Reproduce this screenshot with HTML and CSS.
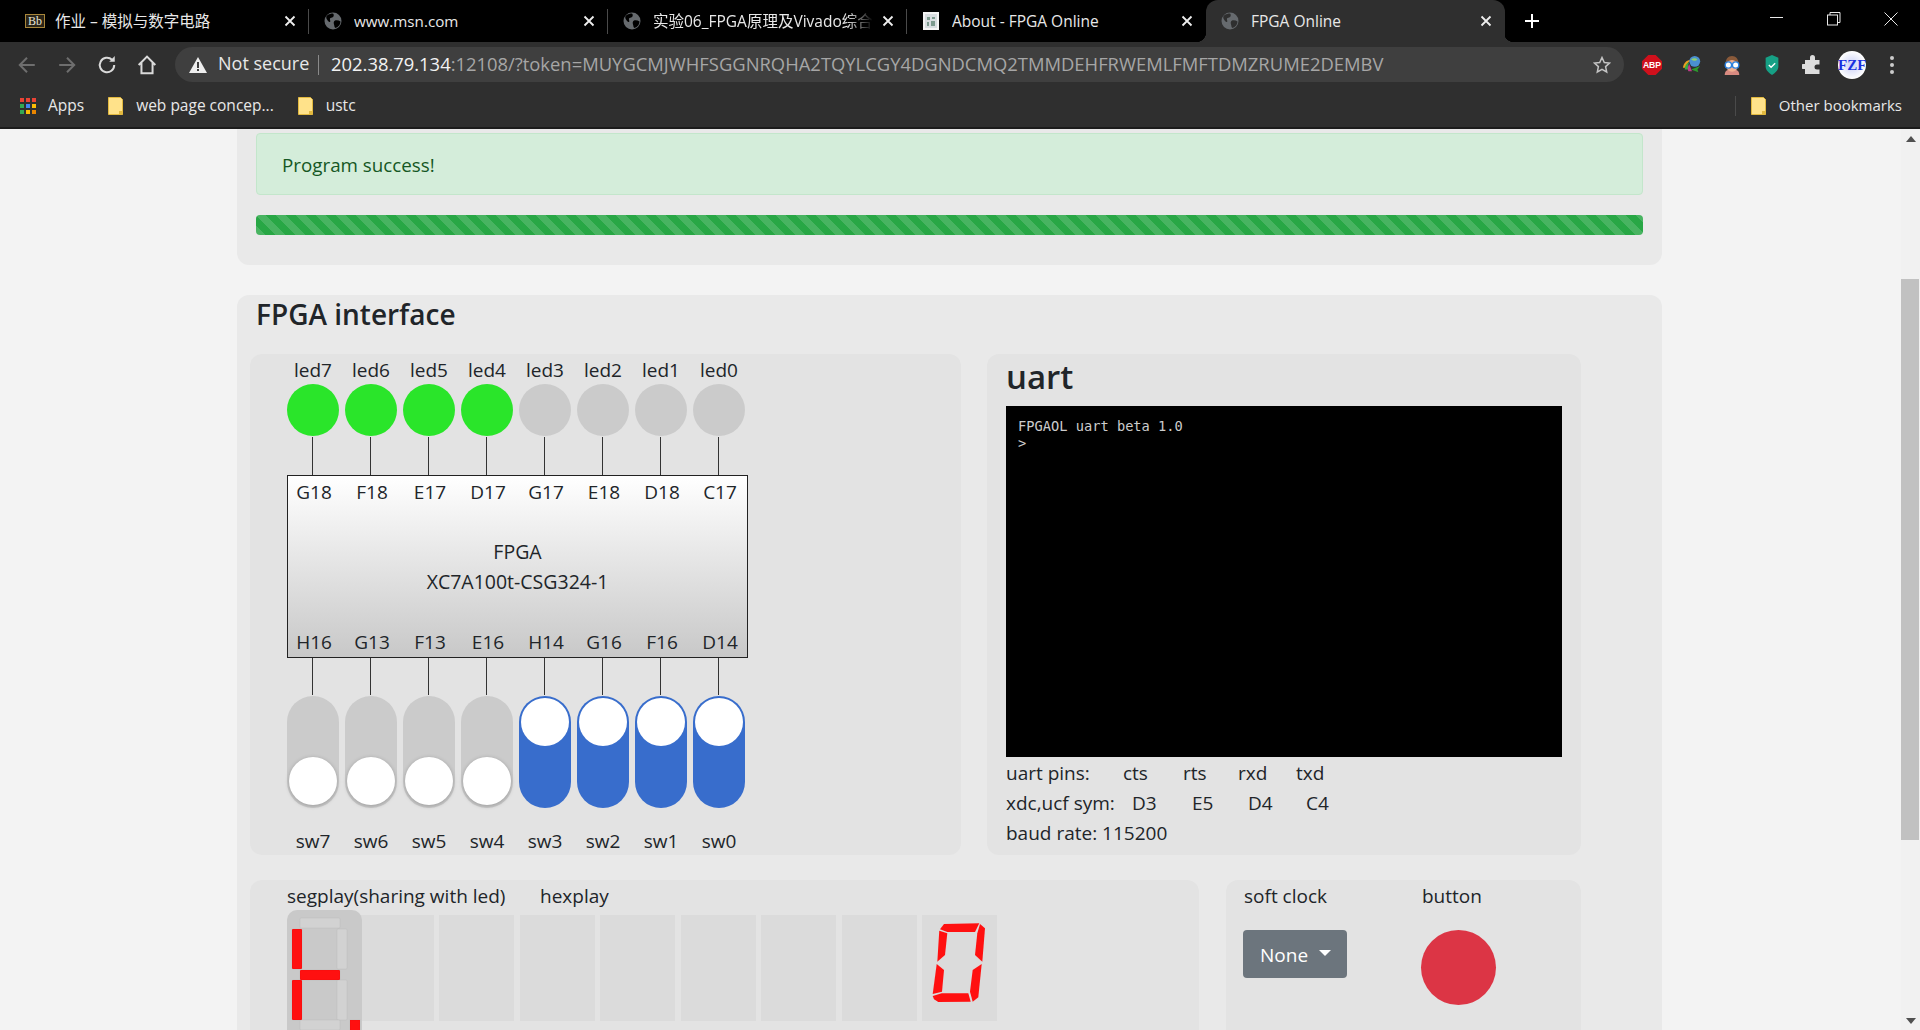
FILE: index.html
```html
<!DOCTYPE html>
<html>
<head>
    <title>FPGA Online</title>
    <link rel="stylesheet" href="styles.css">
</head>
<body>
    <header class="browser">
        <div class="tabs">
            <div class="tab">
                <span class="bb-icon">Bb</span>
                <span class="tab-title">作业 – 模拟与数字电路</span>
                <svg class="tab-close" viewBox="0 0 12 12"><path d="M1.5 1.5l9 9M10.5 1.5l-9 9"/></svg>
            </div>
            <div class="tab">
                <svg class="globe" viewBox="0 0 18 18"><circle cx="9" cy="9" r="8.5" fill="#666a6e"/><path d="M3 3.5c2 -1.5 4 -2 6 -2c1 1 1 2.500 0 3.500c-1 1 -2.500 .5 -3 1.500c-.5 1.500 1 2.500 0 3.500c-1 .5 -2 -1 -3 -2.500c-1 -1.500 -1 -3 0 -4.500z" fill="#000"/><path d="M11 8.500c2 -.5 4 0 5.500 1c0 3 -2 5.500 -5 6.500c-1.500 -1 -1 -2.500 -1.500 -3.500c-.5 -1.500 -.5 -3.500 1 -4z" fill="#000"/></svg>
                <span class="tab-title tab-title-msn">www.msn.com</span>
                <svg class="tab-close" viewBox="0 0 12 12"><path d="M1.5 1.5l9 9M10.5 1.5l-9 9"/></svg>
            </div>
            <div class="tab">
                <svg class="globe" viewBox="0 0 18 18"><circle cx="9" cy="9" r="8.5" fill="#666a6e"/><path d="M3 3.5c2 -1.5 4 -2 6 -2c1 1 1 2.500 0 3.500c-1 1 -2.500 .5 -3 1.500c-.5 1.500 1 2.500 0 3.500c-1 .5 -2 -1 -3 -2.500c-1 -1.500 -1 -3 0 -4.500z" fill="#000"/><path d="M11 8.500c2 -.5 4 0 5.500 1c0 3 -2 5.500 -5 6.500c-1.500 -1 -1 -2.500 -1.500 -3.500c-.5 -1.500 -.5 -3.500 1 -4z" fill="#000"/></svg>
                <span class="tab-title tab-title-long">实验06_FPGA原理及Vivado综合</span>
                <svg class="tab-close" viewBox="0 0 12 12"><path d="M1.5 1.5l9 9M10.5 1.5l-9 9"/></svg>
            </div>
            <div class="tab tab-last">
                <svg class="globe" viewBox="0 0 18 18"><rect x="1" y="0" width="16" height="18" fill="#f4f4f4"/><rect x="3" y="2" width="12" height="14" fill="#d8dde0"/><path d="M5 5h3v3H5zM10 5h3v2h-3zM5 10h2v4H5zM9 9h4v5H9z" fill="#7c9a8e"/></svg>
                <span class="tab-title">About - FPGA Online</span>
                <svg class="tab-close" viewBox="0 0 12 12"><path d="M1.5 1.5l9 9M10.5 1.5l-9 9"/></svg>
            </div>
            <div class="tab tab-active">
                <svg class="globe" viewBox="0 0 18 18"><circle cx="9" cy="9" r="8.5" fill="#666a6e"/><path d="M3 3.5c2 -1.5 4 -2 6 -2c1 1 1 2.500 0 3.500c-1 1 -2.500 .5 -3 1.500c-.5 1.500 1 2.500 0 3.500c-1 .5 -2 -1 -3 -2.500c-1 -1.500 -1 -3 0 -4.500z" fill="#2f2f2f"/><path d="M11 8.500c2 -.5 4 0 5.500 1c0 3 -2 5.500 -5 6.500c-1.500 -1 -1 -2.500 -1.500 -3.500c-.5 -1.500 -.5 -3.500 1 -4z" fill="#2f2f2f"/></svg>
                <span class="tab-title">FPGA Online</span>
                <svg class="tab-close" viewBox="0 0 12 12"><path d="M1.5 1.5l9 9M10.5 1.500l-9 9"/></svg>
            </div>
            <svg class="new-tab" viewBox="0 0 16 16"><path d="M8 1v14M1 8h14"/></svg>
            <div class="win-controls">
                <svg viewBox="0 0 14 14"><path d="M0 5.500h13"/></svg>
                <svg viewBox="0 0 14 14"><path d="M3 3V.5h10v10h-2.500"/><rect x=".5" y="3" width="10" height="10"/></svg>
                <svg viewBox="0 0 14 14"><path d="M.5 .5l13 13M13.500 .5l-13 13"/></svg>
            </div>
        </div>
        <div class="toolbar">
            <span class="tool"><svg viewBox="0 0 18 18" class="nav-off"><path d="M16 9H2.500M9 2.500L2.500 9 9 15.500"/></svg></span>
            <span class="tool"><svg viewBox="0 0 18 18" class="nav-off"><path d="M2 9h13.500M9 2.500L15.500 9 9 15.500"/></svg></span>
            <span class="tool"><svg viewBox="0 0 18 18" class="nav-on"><path d="M15.500 9a6.500 6.500 0 1 1-2-4.700"/><path d="M16 1v5h-5" class="solid"/></svg></span>
            <span class="tool"><svg viewBox="0 0 18 18" class="nav-on"><path d="M1.500 9L9 1.500 16.500 9M4 7v9.500h10V7"/></svg></span>
            <div class="omnibox">
                <svg class="warn" viewBox="0 0 18 16"><path d="M9 0l9 16H0z" fill="#eee"/><path d="M8 5h2v6H8zM8 12h2v2H8z" fill="#3f3f3f"/></svg>
                <span class="not-secure">Not secure</span>
                <span class="omni-sep"></span>
                <span class="url"><span class="host">202.38.79.134</span>:12108/?token=MUYGCMJWHFSGGNRQHA2TQYLCGY4DGNDCMQ2TMMDEHFRWEMLFMFTDMZRUME2DEMBV</span>
                <svg class="star" viewBox="0 0 18 18"><path d="M9 1.500l2.300 5 5.200.6-3.900 3.500 1.100 5.400L9 13.300 4.300 16l1.100-5.400-3.900-3.500 5.200-.6z"/></svg>
            </div>
            <div class="extensions">
                <span class="tool"><svg viewBox="0 0 22 22"><path d="M7 0h8l7 7v8l-7 7H7l-7-7V7z" fill="#d0101c"/><text x="11" y="14.500" class="abp-text">ABP</text></svg></span>
                <span class="tool"><svg viewBox="0 0 22 22"><path d="M1 14c1-6 5-9 9-8-3 1-5 4-5 8z" fill="#e8a020"/><path d="M3 16c0-4 2-7 5-8-1 2-2 5-1 8z" fill="#3aa845"/><path d="M7 18c-1-2-1-5 1-8l3 8z" fill="#c03a8a"/><circle cx="14" cy="7" r="6" fill="#4a90d0"/><path d="M10 5c2-2 5-2 7 0-1 1-3 2-5 1z" fill="#8fd070"/><path d="M10 16l10-4-3 4 1 3z" fill="#2d9a2d"/></svg></span>
                <span class="tool"><svg viewBox="0 0 22 22"><path d="M4 12C3 4 7 1 11 1s8 3 7 11z" fill="#8a5a3a"/><path d="M3 22c0-5 3-6 8-6s8 1 8 6z" fill="#d88a80"/><circle cx="11" cy="12" r="6.500" fill="#f0b090"/><circle cx="7" cy="11" r="3.500" fill="#fff" stroke="#2a80e0" stroke-width="1.500"/><circle cx="15" cy="11" r="3.500" fill="#fff" stroke="#2a80e0" stroke-width="1.500"/></svg></span>
                <span class="tool"><svg viewBox="0 0 22 22"><path d="M11 0l7 3v10c0 4-4 7-7 9-3-2-7-5-7-9V3z" fill="#16a085"/><path d="M7.500 11l2.500 2.500 4.500-4.500" class="shield-check"/></svg></span>
                <span class="tool"><svg viewBox="0 0 20 20"><path d="M8 2.500a2.500 2.500 0 0 1 5 0V5h4.500v4.500H15a2.500 2.500 0 0 0 0 5h2.500V19H3v-5H1a2.500 2.500 0 0 1 0-5h2V5h5z" fill="#dcdcdc"/></svg></span>
                <span class="tool"><span class="avatar">FZF</span></span>
                <span class="tool"><svg viewBox="0 0 6 20"><circle cx="3" cy="3" r="2" fill="#ccc"/><circle cx="3" cy="10" r="2" fill="#ccc"/><circle cx="3" cy="17" r="2" fill="#ccc"/></svg></span>
            </div>
        </div>
        <div class="bookmarks">
            <svg class="apps" viewBox="0 0 16 16"><path d="M0 0h4v4H0zM6 0h4v4H6zM12 0h4v4h-4z" fill="#ea4335"/><path d="M0 6h4v4H0z" fill="#34a853"/><path d="M6 6h4v4H6z" fill="#4285f4"/><path d="M12 6h4v4h-4z" fill="#fbbc05"/><path d="M0 12h4v4H0z" fill="#34a853"/><path d="M6 12h4v4H6z" fill="#fbbc05"/><path d="M12 12h4v4h-4z" fill="#ea8600"/></svg>
            <span class="bm-text bm-apps">Apps</span>
            <svg class="folder" viewBox="0 0 15 18"><path d="M.5 .5h12l2 2v15H.5z" fill="#ffe28a" stroke="#e2b93f"/><path d="M11 14h3.500v3.500H11z" fill="#e2b93f"/></svg>
            <span class="bm-text">web page concep...</span>
            <svg class="folder" viewBox="0 0 15 18"><path d="M.5 .5h12l2 2v15H.5z" fill="#ffe28a" stroke="#e2b93f"/><path d="M11 14h3.500v3.500H11z" fill="#e2b93f"/></svg>
            <span class="bm-text">ustc</span>
            <span class="bm-sep"></span>
            <svg class="folder" viewBox="0 0 15 18"><path d="M.5 .5h12l2 2v15H.5z" fill="#ffe28a" stroke="#e2b93f"/><path d="M11 14h3.500v3.500H11z" fill="#e2b93f"/></svg>
            <span class="bm-text">Other bookmarks</span>
        </div>
    </header>

    <div class="viewport">
        <main class="page">
            <section class="card card-status">
                <div class="alert">Program success!</div>
                <div class="progress"></div>
            </section>

            <section class="card card-fpga">
                <h2 class="card-title">FPGA interface</h2>
                <div class="panels">
                    <div class="panel panel-board">
                        <div class="pins pin-labels led-labels">
                            <span>led7</span><span>led6</span><span>led5</span><span>led4</span><span>led3</span><span>led2</span><span>led1</span><span>led0</span>
                        </div>
                        <div class="pins">
                            <span class="led led-on"></span><span class="led led-on"></span><span class="led led-on"></span><span class="led led-on"></span><span class="led"></span><span class="led"></span><span class="led"></span><span class="led"></span>
                        </div>
                        <div class="pins wires wires-top">
                            <i></i><i></i><i></i><i></i><i></i><i></i><i></i><i></i>
                        </div>
                        <div class="chip">
                            <div class="pins pin-labels">
                                <span>G18</span><span>F18</span><span>E17</span><span>D17</span><span>G17</span><span>E18</span><span>D18</span><span>C17</span>
                            </div>
                            <div class="chip-name">FPGA<br>XC7A100t-CSG324-1</div>
                            <div class="pins pin-labels">
                                <span>H16</span><span>G13</span><span>F13</span><span>E16</span><span>H14</span><span>G16</span><span>F16</span><span>D14</span>
                            </div>
                        </div>
                        <div class="pins wires">
                            <i></i><i></i><i></i><i></i><i></i><i></i><i></i><i></i>
                        </div>
                        <div class="pins switches">
                            <span class="switch"><b></b></span><span class="switch"><b></b></span><span class="switch"><b></b></span><span class="switch"><b></b></span>
                            <span class="switch switch-on"><b></b></span><span class="switch switch-on"><b></b></span><span class="switch switch-on"><b></b></span><span class="switch switch-on"><b></b></span>
                        </div>
                        <div class="pins pin-labels sw-labels">
                            <span>sw7</span><span>sw6</span><span>sw5</span><span>sw4</span><span>sw3</span><span>sw2</span><span>sw1</span><span>sw0</span>
                        </div>
                    </div>

                    <div class="panel panel-uart">
                        <h3 class="uart-title">uart</h3>
                        <div class="terminal">FPGAOL uart beta 1.0<br>&gt;</div>
                        <div class="uart-row uart-row-pins"><span>uart pins:</span><span>cts</span><span>rts</span><span>rxd</span><span>txd</span></div>
                        <div class="uart-row uart-row-sym"><span>xdc,ucf sym:</span><span>D3</span><span>E5</span><span>D4</span><span>C4</span></div>
                        <div class="uart-row"><span>baud rate: 115200</span></div>
                    </div>

                    <div class="panel panel-seg">
                        <div class="seg-labels"><span class="seg-label">segplay(sharing with led)</span><span>hexplay</span></div>
                        <div class="seg-row">
                            <svg class="seg-box" viewBox="0 0 75 140">
                                <rect class="seg" x="13" y="8" width="40" height="10" rx="1"/>
                                <rect class="seg seg-lit" x="5" y="19" width="10" height="40" rx="1"/>
                                <rect class="seg" x="50" y="19" width="10" height="40" rx="1"/>
                                <rect class="seg seg-lit" x="13" y="60" width="40" height="10" rx="1"/>
                                <rect class="seg seg-lit" x="5" y="70" width="10" height="40" rx="1"/>
                                <rect class="seg" x="50" y="70" width="10" height="40" rx="1"/>
                                <rect class="seg" x="13" y="110" width="40" height="10" rx="1"/>
                                <rect class="seg seg-lit" x="63" y="110" width="10" height="12"/>
                            </svg>
                            <div class="hex-row">
                                <div class="hex"></div>
                                <div class="hex"></div>
                                <div class="hex"></div>
                                <div class="hex"></div>
                                <div class="hex"></div>
                                <div class="hex"></div>
                                <div class="hex"></div>
                                <div class="hex">
                                    <svg viewBox="0 0 75 106">
                                        <g class="seg-lit">
                                            <polygon points="18,14.300 22,9 57.300,8.300 53,17 25.300,17"/>
                                            <polygon points="58,9 63,13.300 60.300,46.700 53,40 55.300,18.300"/>
                                            <polygon points="17.300,15.700 25.300,18.300 23,40 15.300,46.700"/>
                                            <polygon points="14.700,49 22,55 20,76.700 10.700,79"/>
                                            <polygon points="59.700,49 56.300,82.300 50.700,86.700 48,76.700 50.700,55"/>
                                            <polygon points="10.700,81 19.700,78.300 46.300,78.300 48.700,86.700 16.300,87 12,84.300"/>
                                        </g>
                                    </svg>
                                </div>
                            </div>
                        </div>
                    </div>

                    <div class="panel panel-controls">
                        <div class="control-col control-clock">
                            <div class="control-label">soft clock</div>
                            <div class="dropdown">None<span class="caret"></span></div>
                        </div>
                        <div class="control-col">
                            <div class="control-label">button</div>
                            <div class="push-button"></div>
                        </div>
                    </div>
                </div>
            </section>
        </main>

        <div class="scrollbar">
            <span class="scroll-arrow"><svg viewBox="0 0 10 6"><path d="M5 0l5 6H0z"/></svg></span>
            <div class="scroll-thumb"></div>
            <span class="scroll-arrow scroll-arrow-end"><svg viewBox="0 0 10 6"><path d="M0 0h10L5 6z"/></svg></span>
        </div>
    </div>
</body>
</html>
```

FILE: styles.css
```css
* {
    box-sizing: border-box;
}
body {
    margin: 0;
    height: 1030px;
    overflow: hidden;
    display: flex;
    flex-direction: column;
    background-color: #f3f3f3;
    color: #212529;
    font-family: "Open Sans", "Noto Sans CJK SC", sans-serif;
    font-size: 19px;
    line-height: 30px;
}
svg {
    display: block;
}

/* browser chrome */
.browser {
    flex: none;
    color: #e8e8e8;
    background-color: #2f2f2f;
    font-size: 15px;
}
.tabs {
    height: 42px;
    display: flex;
    align-items: center;
    padding-left: 10px;
    background-color: #000;
}
.tab {
    width: 299px;
    height: 42px;
    flex: none;
    display: flex;
    align-items: center;
    padding-left: 14px;
    border-right: 1px solid transparent;
    position: relative;
}
.tab::after {
    content: "";
    position: absolute;
    right: -1px;
    top: 9px;
    height: 25px;
    width: 1px;
    background-color: #4a4a4a;
}
.tab-last::after {
    display: none;
}
.tab-active {
    background-color: #2f2f2f;
    border-radius: 12px 12px 0 0;
}
.tab-active::before,
.tab-active::after {
    content: "";
    position: absolute;
    top: auto;
    bottom: 0;
    width: 10px;
    height: 10px;
}
.tab-active::before {
    left: -10px;
    background: radial-gradient(circle at 0 0, transparent 10px, #2f2f2f 10.5px);
}
.tab-active::after {
    right: -10px;
    background: radial-gradient(circle at 100% 0, transparent 10px, #2f2f2f 10.5px);
}
.bb-icon {
    width: 20px;
    height: 14px;
    margin-left: 1px;
    background-color: #2a2418;
    border: 1px solid #a8863a;
    color: #e8e4d8;
    font-family: "Liberation Serif", serif;
    font-size: 12px;
    line-height: 12px;
    text-align: center;
}
.globe {
    width: 18px;
    height: 18px;
    margin-left: 1px;
    flex: none;
}
.tab-title {
    position: absolute;
    left: 45px;
    width: 220px;
    overflow: hidden;
    white-space: nowrap;
    font-size: 15.500px;
}
.tab-title-msn {
    font-size: 15.200px;
}
.tab-title-long {
    -webkit-mask-image: linear-gradient(to right, #000 88%, transparent);
    mask-image: linear-gradient(to right, #000 88%, transparent);
}
.tab-close {
    position: absolute;
    left: 274px;
    top: 15px;
    width: 12px;
    height: 12px;
    fill: none;
    stroke: #eee;
    stroke-width: 1.8;
}
.new-tab {
    width: 16px;
    height: 16px;
    margin-left: 19px;
    fill: none;
    stroke: #fff;
    stroke-width: 2;
}
.win-controls {
    margin-left: auto;
    display: flex;
    gap: 43px;
    padding-right: 22px;
    margin-top: -4px;
}
.win-controls svg {
    width: 14px;
    height: 14px;
    fill: none;
    stroke: #e8e8e8;
    stroke-width: 1;
}
.toolbar {
    height: 42px;
    display: flex;
    align-items: center;
    padding: 3px 8px 0 7px;
}
.tool {
    width: 40px;
    height: 32px;
    flex: none;
    display: flex;
    align-items: center;
    justify-content: center;
}
.tool svg {
    width: 20px;
    height: 20px;
}
.nav-off {
    fill: none;
    stroke: #6e6e6e;
    stroke-width: 1.800;
}
.nav-on {
    fill: none;
    stroke: #dadada;
    stroke-width: 1.800;
}
.nav-on .solid {
    fill: #dadada;
    stroke: none;
}
.omnibox {
    flex: 1;
    height: 35px;
    margin: 0 8px;
    padding: 0 13px 0 14px;
    display: flex;
    align-items: center;
    border-radius: 18px;
    background-color: #3f3f3f;
    font-size: 18px;
    line-height: 33px;
    white-space: nowrap;
}
.warn {
    width: 18px;
    height: 16px;
    flex: none;
}
.not-secure {
    margin-left: 11px;
    width: 90px;
    margin-bottom: 2px;
    color: #e8e8e8;
}
.omni-sep {
    width: 1px;
    height: 20px;
    margin: 0 12px 0 10px;
    background-color: #8a8a8a;
}
.url {
    margin-bottom: 2px;
    font-size: 18.400px;
    color: #a6a6a6;
}
.host {
    color: #f2f2f2;
}
.star {
    width: 18px;
    height: 18px;
    margin-left: auto;
    fill: none;
    stroke: #c4c4c4;
    stroke-width: 1.500;
}
.extensions {
    display: flex;
}
.abp-text {
    fill: #fff;
    font-family: "Liberation Sans", sans-serif;
    font-size: 9.500px;
    font-weight: bold;
    text-anchor: middle;
}
.shield-check {
    fill: none;
    stroke: #fff;
    stroke-width: 1.500;
}
.avatar {
    width: 28px;
    height: 28px;
    border-radius: 50%;
    background: radial-gradient(circle, #c9cff7 0%, #fff 70%);
    color: #1a30e0;
    font-family: "Liberation Serif", serif;
    font-size: 15px;
    font-weight: bold;
    line-height: 28px;
    text-align: center;
}
.bookmarks {
    height: 45px;
    display: flex;
    align-items: center;
    padding-left: 20px;
    border-bottom: 2px solid #1c1c1c;
}
.apps {
    width: 16px;
    height: 16px;
}
.bm-text {
    margin: 0 24px 2px 13px;
    font-size: 15.500px;
    color: #e8e8e8;
}
.bm-apps {
    margin-left: 12px;
}
.folder {
    width: 15px;
    height: 18px;
    flex: none;
}
.bm-sep {
    width: 1px;
    height: 20px;
    margin-left: auto;
    margin-right: 15px;
    background-color: #4a4a4a;
}
.bookmarks .bm-text:last-child {
    margin-right: 18px;
    font-size: 15px;
}

/* page */
.viewport {
    flex: 1;
    min-height: 0;
    display: flex;
}
.page {
    flex: 1;
    min-width: 0;
    padding-left: 237px;
    padding-right: 239px;
    overflow: hidden;
}
.scrollbar {
    width: 19px;
    flex: none;
    display: flex;
    flex-direction: column;
    background-color: #f1f1f1;
}
.scroll-arrow {
    height: 19px;
    flex: none;
    display: flex;
    align-items: center;
    justify-content: center;
}
.scroll-arrow svg {
    width: 10px;
    height: 6px;
    fill: #505050;
}
.scroll-arrow-end {
    margin-top: auto;
}
.scroll-thumb {
    height: 561px;
    margin-top: 131px;
    margin-right: 1px;
    background-color: #c1c1c1;
}
.card {
    background-color: #e9e9e9;
}
.card-status {
    height: 136px;
    padding: 4px 19px 0;
    border-radius: 0 0 12px 12px;
}
.alert {
    height: 62px;
    padding: 0 25px;
    border: 1px solid #c3e6cb;
    border-radius: 4px;
    background-color: #d4edda;
    color: #155724;
    font-size: 18.800px;
    line-height: 62px;
}
.progress {
    height: 20px;
    margin-top: 20px;
    border-radius: 4px;
    background-color: #28a745;
    background-image: linear-gradient(45deg, rgba(255,255,255,.15) 25%, transparent 25%, transparent 50%, rgba(255,255,255,.15) 50%, rgba(255,255,255,.15) 75%, transparent 75%, transparent);
    background-size: 20px 20px;
}
.card-fpga {
    margin-top: 30px;
    padding: 0 0 0 13px;
    border-radius: 12px 12px 0 0;
    height: 800px;
}
.card-title {
    margin: 0;
    height: 59px;
    padding-left: 6px;
    font-size: 28px;
    font-weight: 600;
    line-height: 38px;
}
.panels {
    display: grid;
    grid-template-columns: 711px 26px 212px 27px 355px;
    grid-template-rows: 501px auto;
    row-gap: 25px;
}
.panel {
    background-color: #e3e3e3;
    border-radius: 12px;
}

/* board */
.panel-board {
    grid-column: 1;
    padding-left: 37px;
}
.pins {
    display: grid;
    grid-template-columns: repeat(8, 52px);
    column-gap: 6px;
}
.pin-labels {
    text-align: center;
    white-space: nowrap;
}
.led-labels {
    height: 30px;
    line-height: 32px;
}
.led {
    height: 52px;
    border-radius: 50%;
    background-color: #cbcbcb;
}
.led-on {
    background-color: #2ae52a;
}
.wires {
    height: 37px;
}
.wires-top {
    height: 38px;
    margin-top: 1px;
}
.wires i {
    display: block;
    width: 1px;
    margin-left: 25px;
    background-color: #333;
}
.chip {
    width: 461px;
    height: 183px;
    display: flex;
    flex-direction: column;
    justify-content: space-between;
    padding-top: 1px;
    border: 1px solid #222;
    background: linear-gradient(#fff, #c8c8c8);
}
.chip-name {
    text-align: center;
    font-size: 19.500px;
}
.switches {
    margin-top: 1px;
}
.switch {
    height: 112px;
    display: flex;
    align-items: flex-end;
    padding: 0 2px 3px;
    border-radius: 26px;
    background-color: #cbcbcb;
}
.switch b {
    display: block;
    width: 48px;
    height: 48px;
    border-radius: 50%;
    background-color: #fff;
    box-shadow: 0 1px 4px rgba(0,0,0,.25);
}
.switch-on {
    align-items: flex-start;
    padding-top: 2px;
    background-color: #386dcc;
}
.switch-on b {
    box-shadow: none;
}
.sw-labels {
    margin-top: 18px;
}

/* uart */
.panel-uart {
    grid-column: 3 / 6;
    padding-left: 19px;
}
.uart-title {
    margin: 0;
    height: 52px;
    font-size: 33px;
    font-weight: 600;
    line-height: 46px;
}
.terminal {
    width: 556px;
    height: 351px;
    margin-bottom: 1px;
    padding: 12px;
    background-color: #000;
    color: #ccc;
    font-family: "DejaVu Sans Mono", monospace;
    font-size: 13.700px;
    line-height: 17px;
}
.uart-row {
    display: grid;
    white-space: nowrap;
}
.uart-row-pins {
    grid-template-columns: 117px 60px 55px 58px auto;
}
.uart-row-sym {
    grid-template-columns: 126px 60px 56px 58px auto;
}

/* segment displays */
.panel-seg {
    grid-column: 1 / 4;
    height: 300px;
    padding-left: 37px;
}
.seg-labels {
    display: flex;
    height: 30px;
    line-height: 32px;
}
.seg-label {
    width: 253px;
}
.seg-row {
    display: flex;
}
.seg-box {
    width: 75px;
    height: 140px;
    flex: none;
    margin-right: -3.500px;
    position: relative;
    z-index: 1;
    border-radius: 10px;
    background-color: #c9c9c9;
}
.seg {
    fill: #d2d2d2;
    stroke: rgba(0,0,0,.04);
}
.seg-lit,
.seg.seg-lit {
    fill: #ff1010;
}
.hex-row {
    display: flex;
    gap: 5.500px;
    margin-top: 5px;
}
.hex {
    width: 75px;
    height: 106px;
    background-color: #dbdbdb;
}
.hex svg {
    width: 75px;
    height: 106px;
}

/* clock and button */
.panel-controls {
    grid-column: 5;
    height: 300px;
    display: flex;
    padding-left: 17px;
}
.control-clock {
    width: 178px;
}
.control-label {
    height: 50px;
    padding: 1px 0 0 1px;
}
.dropdown {
    width: 104px;
    height: 48px;
    padding: 1px 0 0 17px;
    border-radius: 4px;
    background-color: #6c757d;
    color: #fff;
    line-height: 48px;
    display: flex;
    align-items: center;
}
.caret {
    margin-left: 11px;
    margin-bottom: 3px;
    border-top: 6px solid #fff;
    border-left: 6px solid transparent;
    border-right: 6px solid transparent;
}
.push-button {
    width: 75px;
    height: 75px;
    border-radius: 50%;
    background-color: #dc3545;
}
```
